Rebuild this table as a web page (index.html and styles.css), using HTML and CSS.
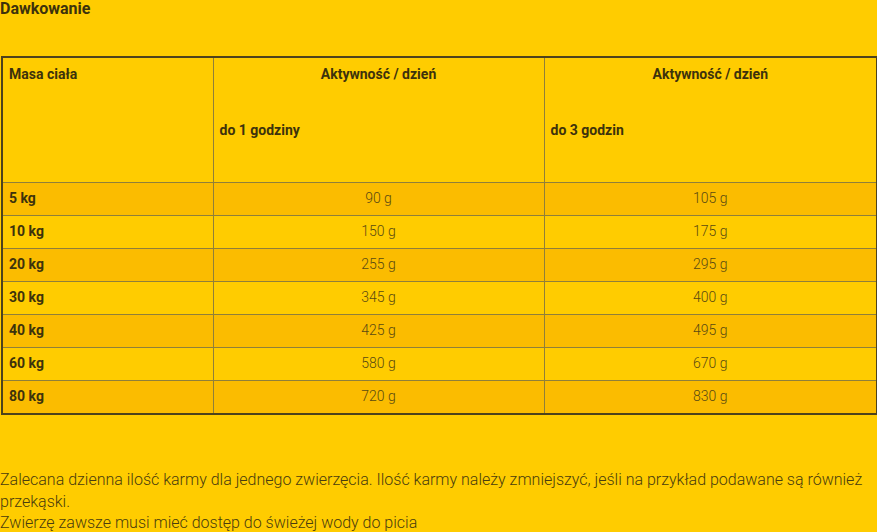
FILE: index.html
```html
<!DOCTYPE html>
<html lang="pl">
<head>
<meta charset="utf-8">
<link rel="stylesheet" href="styles.css">
</head>
<body>
<div class="page">
  <h3 class="title">Dawkowanie</h3>
  <table class="dose">
    <colgroup><col class="c1"><col class="c2"><col class="c3"></colgroup>
    <thead>
      <tr>
        <th class="head-left"><div class="h1">Masa ciała</div></th>
        <th><div class="h1 center">Aktywność / dzień</div><div class="h2">do 1 godziny</div></th>
        <th><div class="h1 center">Aktywność / dzień</div><div class="h2">do 3 godzin</div></th>
      </tr>
    </thead>
    <tbody>
      <tr class="alt"><td class="kg">5 kg</td><td class="val">90 g</td><td class="val">105 g</td></tr>
      <tr><td class="kg">10 kg</td><td class="val">150 g</td><td class="val">175 g</td></tr>
      <tr class="alt"><td class="kg">20 kg</td><td class="val">255 g</td><td class="val">295 g</td></tr>
      <tr><td class="kg">30 kg</td><td class="val">345 g</td><td class="val">400 g</td></tr>
      <tr class="alt"><td class="kg">40 kg</td><td class="val">425 g</td><td class="val">495 g</td></tr>
      <tr><td class="kg">60 kg</td><td class="val">580 g</td><td class="val">670 g</td></tr>
      <tr class="alt"><td class="kg">80 kg</td><td class="val">720 g</td><td class="val">830 g</td></tr>
    </tbody>
  </table>
  <p class="note">Zalecana dzienna ilość karmy dla jednego zwierzęcia. Ilość karmy należy zmniejszyć, jeśli na przykład podawane są również przekąski.<br>Zwierzę zawsze musi mieć dostęp do świeżej wody do picia</p>
</div>
</body>
</html>
```
FILE: styles.css
```css
html, body {
  margin: 0;
  padding: 0;
  background: #ffcc00;
}
body {
  font-family: Roboto, "Liberation Sans", sans-serif;
  color: #3d320c;
}
.page {
  width: 877px;
  height: 532px;
  overflow: hidden;
}
.title {
  margin: 0;
  padding: 0;
  font-size: 16px;
  font-weight: 700;
  line-height: 18px;
  color: #3d320c;
}
.dose {
  margin: 38px 0 0 1px;
  width: 875px;
  border-collapse: collapse;
  border: 2px solid #4d421c;
  table-layout: fixed;
}
.c1 { width: 211px; }
.c2 { width: 331px; }
.c3 { width: 333px; }
.dose th, .dose td {
  border: 1px solid #8f7f3a;
  padding: 0 6px;
  font-size: 14px;
}
.dose th {
  height: 116px;
  vertical-align: top;
  text-align: left;
  font-weight: 700;
  padding-top: 8px;
}
.h1 { line-height: 17px; }
.h1.center { text-align: center; }
.h2 { margin-top: 39px; line-height: 17px; }
.dose td {
  height: 25px;
  vertical-align: top;
  padding-top: 7px;
  padding-bottom: 0;
  line-height: 17px;
}
.dose tr.alt td { background: #fbbc00; }
.kg { font-weight: 700; }
.val {
  text-align: center;
  font-weight: 300;
  color: #5a4a12;
}
.note {
  margin: 54px 0 0 0;
  font-size: 16px;
  font-weight: 300;
  line-height: 21.5px;
  color: #4a3c0e;
}
```
